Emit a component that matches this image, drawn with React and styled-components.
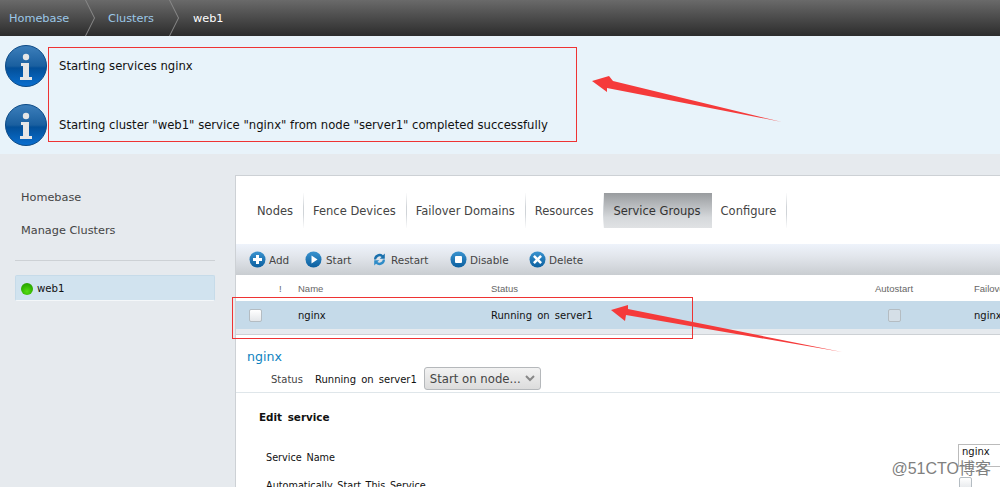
import React from "react";
import styled, { createGlobalStyle } from "styled-components";

const GlobalStyle = createGlobalStyle`
  html, body {
    margin: 0;
    padding: 0;
    background: #e6eaee;
    font-family: "DejaVu Sans", sans-serif;
    font-size: 12px;
    color: #111;
  }
`;

const Page = styled.div`
  position: relative;
  width: 1000px;
  height: 487px;
  overflow: hidden;
  background: #e6eaee;
`;

const Header = styled.header`
  display: flex;
  height: 36px;
  align-items: stretch;
  background: linear-gradient(#6a6a6a, #545454 35%, #2c2c2c);
  font-size: 11.3px;
`;

const Crumb = styled.div`
  display: flex;
  align-items: center;
  width: ${(p) => p.$width}px;
  padding-left: ${(p) => p.$pad}px;
  box-sizing: border-box;
  color: ${(p) => (p.$current ? "#fff" : "#9cc8e8")};
`;

const CrumbSep = styled.svg`
  width: 11px;
  height: 36px;
  flex: none;
`;

const Messages = styled.section`
  display: flex;
  flex-direction: column;
  gap: 17px;
  height: 118px;
  box-sizing: border-box;
  padding: 9px 0 8px 5px;
  background: #e8f3fa;
`;

const Message = styled.div`
  display: flex;
  gap: 12px;
  height: 42px;
  align-items: center;
  font-size: 11.64px;
`;

const Main = styled.div`
  display: flex;
`;

const Sidebar = styled.aside`
  width: 235px;
  flex: none;
  box-sizing: border-box;
  padding: 35px 20px 0 15px;
  font-size: 11.3px;
`;

const SideLink = styled.div`
  height: 33px;
  padding-left: 6px;
  line-height: 17px;
  color: #444;
`;

const SideRule = styled.hr`
  margin: 5px 0 14px;
  border: 0;
  border-top: 1px solid #cdd1d5;
`;

const ClusterItem = styled.div`
  display: flex;
  align-items: center;
  gap: 4px;
  height: 26px;
  padding: 1px 0 0 5px;
  box-sizing: border-box;
  background: #d1e3ef;
  border: 1px solid #c6dbe9;
  border-bottom-color: #f4f7f9;
  border-radius: 2px;
  font-size: 10.2px;
  color: #111;
`;

const StatusDot = styled.span`
  width: 12px;
  height: 12px;
  border-radius: 50%;
  background: radial-gradient(circle at 50% 70%, #55dd11, #2fb000 60%, #259400);
`;

const Panel = styled.main`
  flex: 1;
  margin-top: 21px;
  height: 312px;
  overflow: hidden;
  background: #fff;
  border-top: 1px solid #cdd1d5;
  border-left: 1px solid #cdd1d5;
`;

const Tabs = styled.nav`
  display: flex;
  height: 35px;
  margin: 17px 0 16px 12px;
  font-size: 11.5px;
`;

const Tab = styled.div`
  display: flex;
  align-items: center;
  padding: 1px ${(p) => (p.$active ? 11 : 10)}px 0 9px;
  border-right: ${(p) => (p.$plain ? "0" : "1px solid #d8dcdf")};
  border-image: ${(p) => (p.$plain ? "none" : "linear-gradient(#fff, #d0d4d8 40%, #d0d4d8 60%, #fff) 1")};
  color: ${(p) => (p.$active ? "#333" : "#444")};
  background: ${(p) => (p.$active ? "linear-gradient(#999c9f, #d5d8db 70%, #e0e2e4)" : "none")};
`;

const Toolbar = styled.div`
  display: flex;
  align-items: center;
  height: 31px;
  padding-left: 13px;
  background: linear-gradient(#eef3fb, #e2e6ec 40%, #c9cdd1);
  font-size: 10.4px;
  color: #444;
`;

const ToolButton = styled.div`
  display: flex;
  align-items: center;
  gap: ${(p) => p.$gap}px;
  width: ${(p) => p.$width}px;
  flex: none;
`;

const ToolIcon = styled.svg`
  width: ${(p) => p.$size || 17}px;
  height: 17px;
  flex: none;
`;

const ToolLabel = styled.span`
  padding-top: 1px;
`;

const TableRow = styled.div`
  display: grid;
  grid-template-columns: 30px 19px 193px 384px 99px 1fr;
  align-items: center;
  padding-left: 13px;
  height: ${(p) => p.$height}px;
  background: ${(p) => p.$bg || "#fff"};
  font-size: ${(p) => (p.$head ? "9.5px" : "10px")};
  word-spacing: ${(p) => (p.$head ? "0" : "2px")};
  color: ${(p) => (p.$head ? "#666" : "#111")};
  font-family: ${(p) => (p.$head ? '"Liberation Sans", sans-serif' : "inherit")};
`;

const TableGap = styled.div`
  height: 5px;
  background: #e6eaee;
  border-bottom: 1px solid #cdd1d5;
`;

const AutoCell = styled.div`
  display: flex;
  justify-content: center;
  width: 39px;
`;

const Check = styled.span`
  display: block;
  width: 11px;
  height: 11px;
  border: 1px solid #b4bcc2;
  border-radius: 2px;
  background: ${(p) => (p.$muted ? "#d5dfe7" : "linear-gradient(#fff, #e4e7ea)")};
`;

const Detail = styled.div`
  padding: 13px 0 0 11px;
`;

const DetailTitle = styled.h2`
  margin: 0;
  font-size: 12.6px;
  font-weight: normal;
  line-height: 18px;
  color: #0d82c0;
`;

const StatusRow = styled.div`
  display: flex;
  align-items: center;
  height: 25px;
  margin-top: 1px;
  padding-left: 24px;
  font-size: 10px;
  word-spacing: 2px;
`;

const StatusLabel = styled.span`
  width: 44px;
  color: #444;
`;

const NodeSelect = styled.div`
  display: flex;
  align-items: center;
  justify-content: space-between;
  width: 117px;
  height: 23px;
  margin: -2px 0 0 7px;
  padding: 0 5px;
  box-sizing: border-box;
  border: 1px solid #b5b8bb;
  border-radius: 3px;
  background: linear-gradient(#f2f2f2, #dcdcdc);
  font-size: 11.7px;
  word-spacing: 0;
  color: #444;
`;

const FormSection = styled.div`
  border-top: 1px solid #dfe6ea;
  font-size: 9.7px;
  word-spacing: 1.5px;
`;

const FormTitle = styled.h3`
  margin: 0;
  padding: 17px 0 0 23px;
  font-size: 10.4px;
  word-spacing: 2px;
  line-height: 14px;
`;

const FormRow = styled.div`
  display: flex;
  align-items: center;
  justify-content: space-between;
  height: ${(p) => p.$height}px;
  margin-top: ${(p) => p.$top || 0}px;
  padding-left: 30px;
`;

const NameInput = styled.div`
  align-self: flex-start;
  width: 42px;
  height: 23px;
  flex: none;
  padding-left: 3px;
  box-sizing: border-box;
  border: 1px solid #bbb;
  border-right: 0;
  line-height: 13px;
  font-size: 10px;
`;

const FormCheck = styled(Check)`
  margin: -3px 28px 0 0;
`;

const Overlay = styled.svg`
  position: absolute;
  inset: 0;
  width: 1000px;
  height: 487px;
  pointer-events: none;
`;

const Watermark = styled.div`
  position: absolute;
  right: 9px;
  bottom: 8px;
  font-family: "Liberation Sans", "Noto Sans CJK SC", sans-serif;
  font-size: 16px;
  color: #808080;
`;

const InfoIcon = () => (
  <svg width="42" height="42" viewBox="0 0 42 42" style={{ flex: "none" }}>
    <defs>
      <linearGradient id="infoBg" x1="0" y1="0" x2="0" y2="1">
        <stop offset="0" stopColor="#3d7fbb" />
        <stop offset="0.5" stopColor="#1a5f9f" />
        <stop offset="0.55" stopColor="#034f98" />
        <stop offset="1" stopColor="#0a6fd0" />
      </linearGradient>
    </defs>
    <circle cx="21" cy="21" r="20.5" fill="url(#infoBg)" stroke="#0c4a86" strokeWidth="1" />
    <circle cx="21" cy="12" r="3.2" fill="#e6e6e6" />
    <path d="M16 18h8v14h3v3H15v-3h3V21h-2z" fill="#e6e6e6" />
  </svg>
);

const ToolGlyph = ({ children }) => (
  <ToolIcon viewBox="0 0 17 17">
    <defs>
      <linearGradient id="toolBg" x1="0" y1="0" x2="0" y2="1">
        <stop offset="0" stopColor="#3a93cf" />
        <stop offset="1" stopColor="#0b5f9f" />
      </linearGradient>
    </defs>
    <circle cx="8.5" cy="8.5" r="8" fill="url(#toolBg)" />
    {children}
  </ToolIcon>
);

const Crumbs = () => (
  <Header>
    <Crumb $width={85} $pad={9}>Homebase</Crumb>
    <CrumbSep viewBox="0 0 11 36">
      <path d="M0.5 0L9.5 18L0.5 36" fill="none" stroke="#8a8a8a" />
    </CrumbSep>
    <Crumb $width={73} $pad={12}>Clusters</Crumb>
    <CrumbSep viewBox="0 0 11 36">
      <path d="M0.5 0L9.5 18L0.5 36" fill="none" stroke="#8a8a8a" />
    </CrumbSep>
    <Crumb $width={100} $pad={13} $current>web1</Crumb>
  </Header>
);

export default function App() {
  return (
    <Page>
      <GlobalStyle />
      <Crumbs />

      <Messages>
        <Message>
          <InfoIcon />
          <span>Starting services nginx</span>
        </Message>
        <Message>
          <InfoIcon />
          <span>Starting cluster "web1" service "nginx" from node "server1" completed successfully</span>
        </Message>
      </Messages>

      <Main>
        <Sidebar>
          <SideLink>Homebase</SideLink>
          <SideLink>Manage Clusters</SideLink>
          <SideRule />
          <ClusterItem>
            <StatusDot />
            web1
          </ClusterItem>
        </Sidebar>

        <Panel>
          <Tabs>
            <Tab>Nodes</Tab>
            <Tab>Fence Devices</Tab>
            <Tab>Failover Domains</Tab>
            <Tab>Resources</Tab>
            <Tab $active $plain>Service Groups</Tab>
            <Tab>Configure</Tab>
          </Tabs>

          <Toolbar>
            <ToolButton $width={56} $gap={3}>
              <ToolGlyph><path d="M7 4h3v3h3v3h-3v3H7v-3H4V7h3z" fill="#fff" /></ToolGlyph>
              <ToolLabel>Add</ToolLabel>
            </ToolButton>
            <ToolButton $width={68} $gap={4}>
              <ToolGlyph><path d="M6.5 4.5L12.5 8.5L6.5 12.5z" fill="#fff" /></ToolGlyph>
              <ToolLabel>Start</ToolLabel>
            </ToolButton>
            <ToolButton $width={77} $gap={4}>
              <ToolIcon $size={14} viewBox="2 0 14 17">
                <path d="M3 8.5A5.5 5.5 0 0 1 12 4.2L13.8 2.6V7.8H8.8L10.6 6A3.4 3.4 0 0 0 5.2 8.5z" fill="#1a70ad" />
                <path d="M14 8.5A5.5 5.5 0 0 1 5 12.8L3.2 14.4V9.2H8.2L6.4 11A3.4 3.4 0 0 0 11.8 8.5z" fill="#2f8cc8" />
              </ToolIcon>
              <ToolLabel>Restart</ToolLabel>
            </ToolButton>
            <ToolButton $width={79} $gap={3}>
              <ToolGlyph><rect x="5" y="5" width="7" height="7" rx="1" fill="#fff" /></ToolGlyph>
              <ToolLabel>Disable</ToolLabel>
            </ToolButton>
            <ToolButton $width={70} $gap={3}>
              <ToolGlyph><path d="M5.8 4L8.5 6.7L11.2 4L13 5.8L10.3 8.5L13 11.2L11.2 13L8.5 10.3L5.8 13L4 11.2L6.7 8.5L4 5.8z" fill="#fff" /></ToolGlyph>
              <ToolLabel>Delete</ToolLabel>
            </ToolButton>
          </Toolbar>

          <TableRow $head $height={26}>
            <span />
            <span>!</span>
            <span>Name</span>
            <span>Status</span>
            <span>Autostart</span>
            <span>Failover</span>
          </TableRow>
          <TableRow $height={28} $bg="#c5dae9">
            <Check />
            <span />
            <span>nginx</span>
            <span>Running on server1</span>
            <AutoCell><Check $muted /></AutoCell>
            <span>nginx</span>
          </TableRow>
          <TableGap />

          <Detail>
            <DetailTitle>nginx</DetailTitle>
            <StatusRow>
              <StatusLabel>Status</StatusLabel>
              <span>Running on server1</span>
              <NodeSelect>
                Start on node...
                <svg width="10" height="7" viewBox="0 0 10 7">
                  <path d="M1 1L5 5L9 1" fill="none" stroke="#888" strokeWidth="2" />
                </svg>
              </NodeSelect>
            </StatusRow>
          </Detail>

          <FormSection>
            <FormTitle>Edit service</FormTitle>
            <FormRow $height={27} $top={20}>
              Service Name
              <NameInput>nginx</NameInput>
            </FormRow>
            <FormRow $height={20} $top={4}>
              Automatically Start This Service
              <FormCheck />
            </FormRow>
          </FormSection>
        </Panel>
      </Main>

      {/* red annotations drawn on top of the screenshot */}
      <Overlay viewBox="0 0 1000 487">
        <rect x="48.5" y="47.5" width="528" height="94" fill="none" stroke="#ee3333" />
        <rect x="232.5" y="297.5" width="460" height="41" fill="none" stroke="#ee3333" />
        <path d="M592 81L609 76L613 81L782 122L607 88L607 92z" fill="#f53a3a" />
        <path d="M611 310L628 305L628 309L842 352L626 315L625 321z" fill="#f53a3a" />
      </Overlay>
      <Watermark>@51CTO博客</Watermark>
    </Page>
  );
}
